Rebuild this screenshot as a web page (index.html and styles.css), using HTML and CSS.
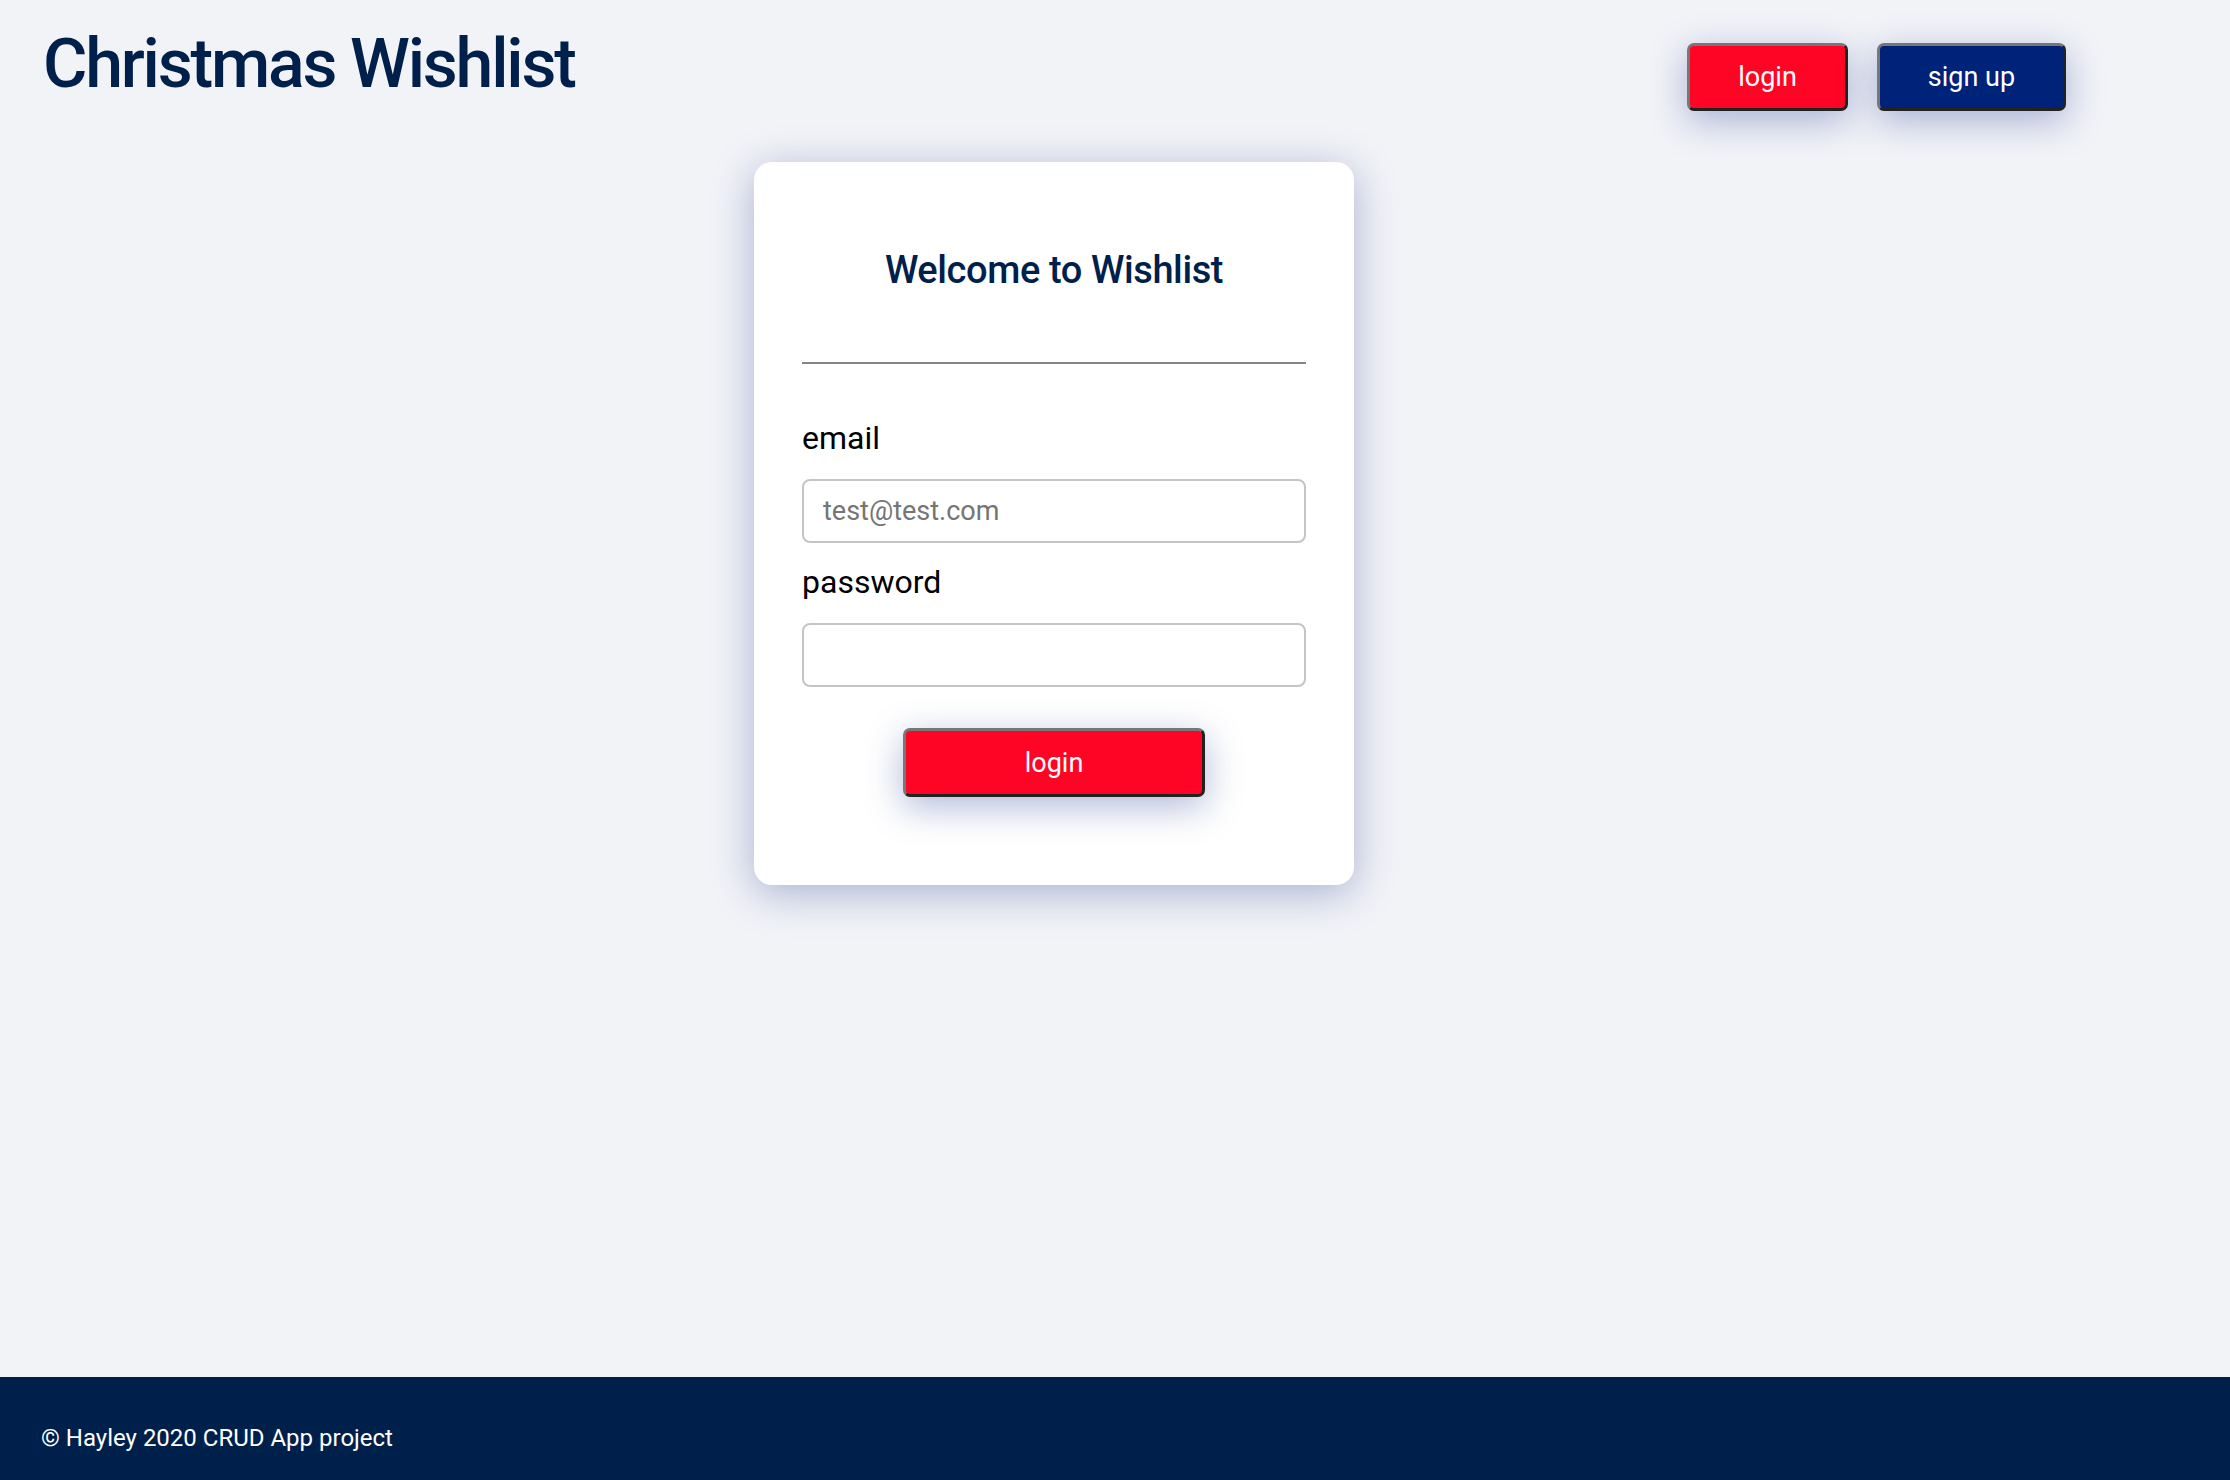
FILE: index.html
```html
<!DOCTYPE html>
<html lang="en">
<head>
<meta charset="utf-8">
<title>Christmas Wishlist</title>
<link rel="stylesheet" href="styles.css">
</head>
<body>
<header class="site-header">
  <h1 class="site-title">Christmas Wishlist</h1>
  <nav class="nav">
    <button class="btn btn-red nav-btn">login</button>
    <button class="btn btn-navy nav-btn nav-btn-wide">sign up</button>
  </nav>
</header>
<main class="main">
  <section class="card">
    <h2 class="card-title">Welcome to Wishlist</h2>
    <hr class="divider">
    <form class="form">
      <label class="label" for="email">email</label>
      <input class="input" id="email" type="email" placeholder="test@test.com">
      <label class="label" for="password">password</label>
      <input class="input" id="password" type="password">
      <button type="button" class="btn btn-red submit-btn">login</button>
    </form>
  </section>
</main>
<footer class="footer">
  <p class="footer-text">© Hayley 2020 CRUD App project</p>
</footer>
</body>
</html>
```

FILE: styles.css
```css
* { box-sizing: border-box; }

html, body { margin: 0; padding: 0; }

body {
  background: #f2f3f7;
  font-family: Roboto, "Liberation Sans", Arial, sans-serif;
  min-height: 100vh;
  display: flex;
  flex-direction: column;
}

.site-header {
  display: flex;
  justify-content: space-between;
  align-items: flex-start;
  padding: 30px 164px 0 43px;
}

.site-title {
  margin: 0;
  font-size: 68px;
  line-height: 68px;
  font-weight: 500;
  letter-spacing: -2.2px;
  color: #00204c;
}

.nav {
  display: flex;
  gap: 29px;
  margin-top: 13px;
}

.btn {
  font-family: Roboto, "Liberation Sans", Arial, sans-serif;
  color: #fff;
  font-size: 27px;
  border-style: solid;
  border-width: 3px;
  border-color: #777 #222 #222 #777;
  border-radius: 7px;
  cursor: pointer;
  box-shadow: 0 10px 36px rgba(40, 60, 150, 0.36);
}

.btn-red { background: #ff0525; }
.btn-navy { background: #00237a; }

.nav-btn {
  width: 161px;
  height: 68px;
}
.nav-btn-wide { width: 189px; }

.main {
  flex: 1;
  padding-top: 51px;
}

.card {
  margin-left: 754px;
  width: 600px;
  background: #fff;
  border-radius: 18px;
  padding: 48px 48px 88px;
  box-shadow: 0 8px 40px rgba(40, 60, 145, 0.36);
}

.card-title {
  margin: 37px 0 0;
  text-align: center;
  font-size: 38px;
  line-height: 46px;
  font-weight: 500;
  letter-spacing: -0.4px;
  color: #00204c;
}

.divider {
  margin: 69px 0 0;
  border: 0;
  height: 2px;
  background: #858585;
}

.form {
  display: flex;
  flex-direction: column;
}

.label {
  margin-top: 55px;
  font-size: 32px;
  line-height: 38px;
  color: #000;
}

.label + .input { margin-top: 22px; }

.input + .label { margin-top: 20px; }

.input {
  height: 64px;
  width: 100%;
  border: 2px solid #c4c4c4;
  border-radius: 8px;
  padding: 0 19px;
  font-family: Roboto, "Liberation Sans", Arial, sans-serif;
  font-size: 27px;
  color: #000;
  background: #fff;
}
.input::placeholder { color: #757575; }

.submit-btn {
  align-self: center;
  margin-top: 41px;
  width: 302px;
  height: 69px;
}

.footer {
  background: #00204c;
  height: 103px;
  padding: 47px 41px 0;
}

.footer-text {
  margin: 0;
  color: #fff;
  font-size: 24px;
  line-height: 28px;
}
```
